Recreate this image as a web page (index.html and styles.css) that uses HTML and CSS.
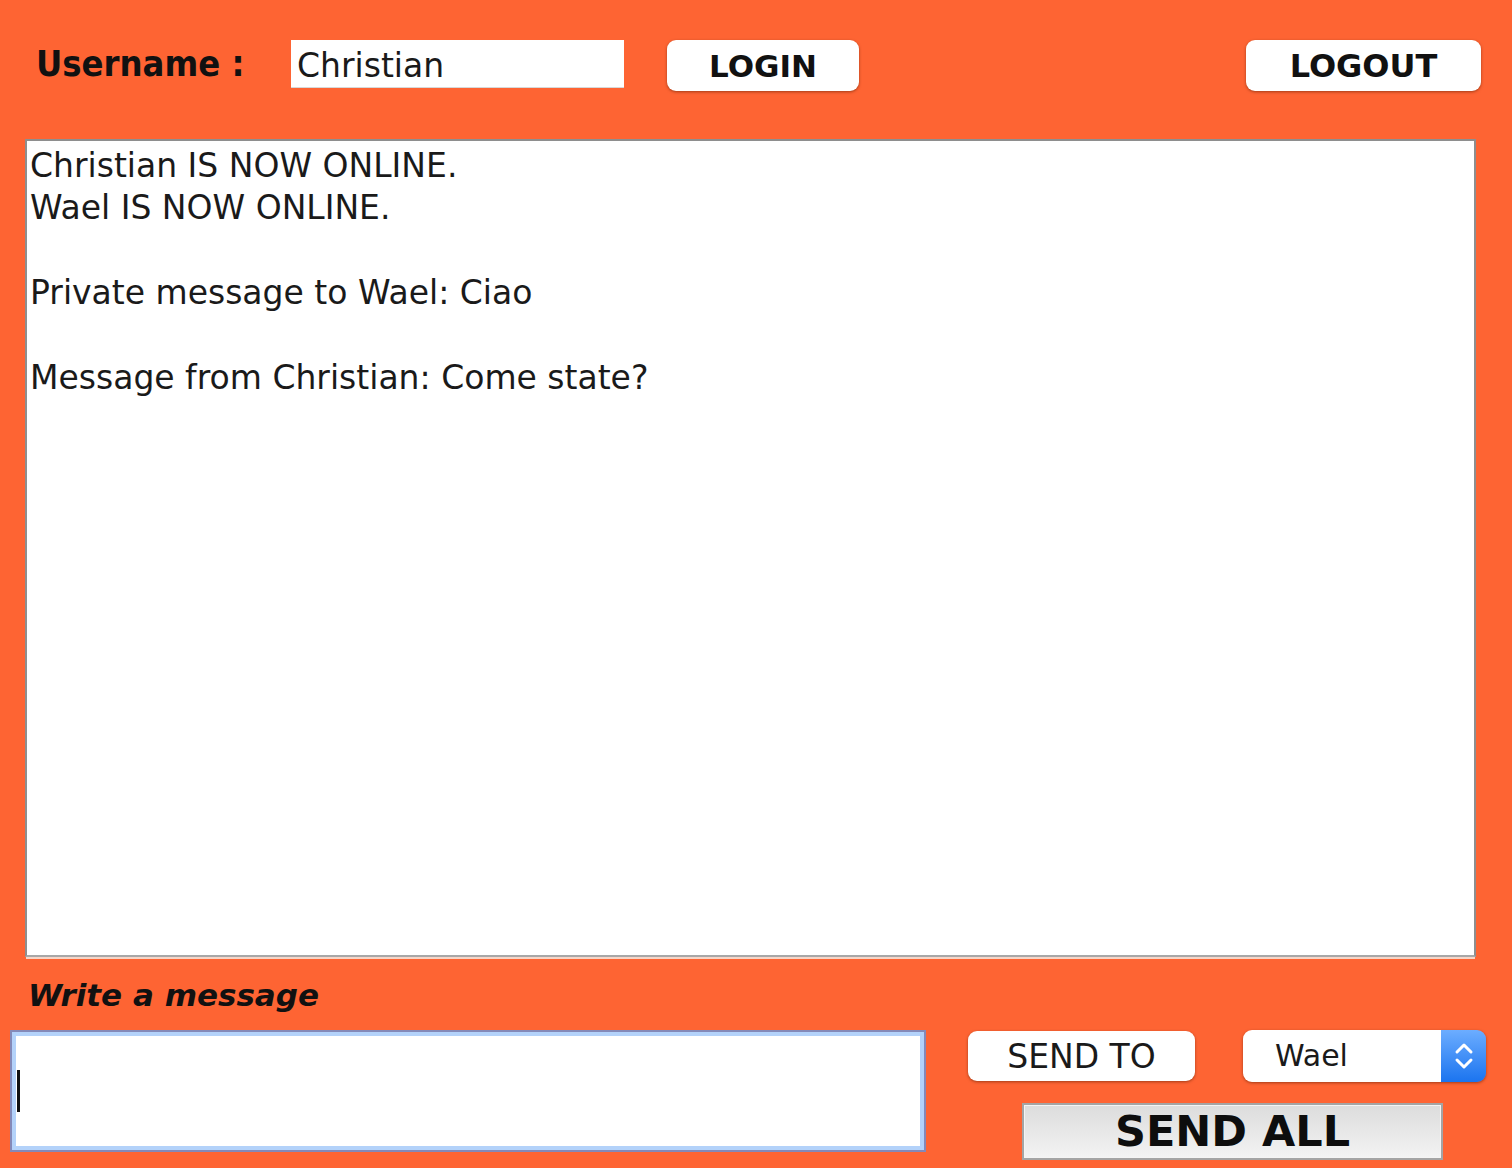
FILE: index.html
```html
<!DOCTYPE html>
<html lang="en">
<head>
<meta charset="utf-8">
<title>Chat Client</title>
<link rel="stylesheet" href="styles.css">
</head>
<body>
<div class="window">
  <div class="top">
    <div class="user-label">Username :</div>
    <div class="user-field">Christian</div>
    <div class="btn btn-login">LOGIN</div>
    <div class="btn btn-logout">LOGOUT</div>
  </div>

  <div class="chat">
    <div class="line">Christian IS NOW ONLINE.</div>
    <div class="line">Wael IS NOW ONLINE.</div>
    <div class="line blank"></div>
    <div class="line">Private message to Wael: Ciao</div>
    <div class="line blank"></div>
    <div class="line">Message from Christian: Come state?</div>
  </div>

  <div class="compose-label">Write a message</div>

  <div class="bottom">
    <div class="compose"><span class="caret"></span></div>
    <div class="actions">
      <div class="actions-row">
        <div class="btn btn-sendto">SEND TO</div>
        <div class="combo">
          <div class="combo-value">Wael</div>
          <div class="combo-arrows">
            <svg width="24" height="34" viewBox="0 0 24 34">
              <path d="M5 13 L12 6 L19 13" fill="none" stroke="#fff" stroke-width="3" stroke-linecap="round" stroke-linejoin="round"/>
              <path d="M5 21 L12 28 L19 21" fill="none" stroke="#fff" stroke-width="3" stroke-linecap="round" stroke-linejoin="round"/>
            </svg>
          </div>
        </div>
      </div>
      <div class="btn-sendall">SEND ALL</div>
    </div>
  </div>
</div>
</body>
</html>
```

FILE: styles.css
```css
html, body {
  margin: 0;
  padding: 0;
}

body {
  background: #fe6433;
  font-family: "DejaVu Sans", "Liberation Sans", sans-serif;
  color: #111;
}

.window {
  width: 1512px;
  height: 1168px;
  display: flex;
  flex-direction: column;
  overflow: hidden;
}

/* ---------- top bar ---------- */
.top {
  display: flex;
  align-items: flex-start;
  padding: 40px 31px 0 36px;
  height: 51px;
}

.user-label {
  font-family: "DejaVu Sans Condensed", "DejaVu Sans", sans-serif;
  font-stretch: condensed;
  font-weight: bold;
  font-size: 36px;
  line-height: 48px;
  color: #111;
  width: 210px;
  white-space: nowrap;
}

.user-field {
  margin-left: 45px;
  width: 333px;
  height: 48px;
  box-sizing: border-box;
  background: #fff;
  border-bottom: 1px solid #d8d8d8;
  font-size: 33px;
  line-height: 51px;
  padding-left: 6px;
  color: #1a1a1a;
  overflow: hidden;
}

.btn {
  background: #fff;
  border-radius: 9px;
  box-shadow: 0 1px 3px rgba(90, 30, 0, 0.55);
  display: flex;
  align-items: center;
  justify-content: center;
  box-sizing: border-box;
  color: #111;
}

.btn-login {
  margin-left: 43px;
  width: 192px;
  height: 51px;
  font-weight: bold;
  font-size: 31px;
}

.btn-logout {
  margin-left: auto;
  width: 235px;
  height: 51px;
  font-weight: bold;
  font-size: 32px;
}

/* ---------- chat area ---------- */
.chat {
  margin: 48px 0 0 25px;
  width: 1451px;
  height: 818px;
  box-sizing: border-box;
  background: #fff;
  border: 2px solid #8e8e8e;
  border-bottom-color: #a8a8a8;
  box-shadow: 0 3px 0 -1px #f6d6c8;
  padding: 4px 3px;
  font-size: 33px;
  line-height: 42.4px;
  color: #1a1a1a;
}

.line.blank {
  height: 42.4px;
}

/* ---------- compose ---------- */
.compose-label {
  margin-top: 20px;
  padding-left: 28px;
  font-weight: bold;
  font-style: italic;
  font-size: 31px;
  line-height: 36px;
  color: #111;
}

.bottom {
  display: flex;
  margin-top: 17px;
  padding-left: 10px;
}

.compose {
  width: 916px;
  height: 122px;
  box-sizing: border-box;
  background: #fff;
  border: 2px solid #8489b8;
  box-shadow: inset 0 0 0 4px #b3d2fa;
  padding-left: 5px;
  display: flex;
  align-items: center;
}

.caret {
  display: block;
  width: 3px;
  height: 42px;
  background: #111;
}

.actions {
  margin-left: 42px;
  display: flex;
  flex-direction: column;
}

.actions-row {
  display: flex;
  align-items: flex-start;
}

.btn-sendto {
  margin-top: 1px;
  width: 227px;
  height: 50px;
  font-size: 33px;
  color: #1a1a1a;
}

.combo {
  margin-left: 48px;
  width: 243px;
  height: 52px;
  display: flex;
  border-radius: 9px;
  overflow: hidden;
  box-shadow: 0 1px 3px rgba(90, 30, 0, 0.55);
}

.combo-value {
  flex: 1;
  background: #fff;
  font-size: 30px;
  line-height: 52px;
  padding-left: 32px;
  color: #1a1a1a;
}

.combo-arrows {
  width: 45px;
  background: linear-gradient(#6cadff, #1b74ef);
  display: flex;
  align-items: center;
  justify-content: center;
}

.btn-sendall {
  margin-top: 21px;
  margin-left: 54px;
  width: 421px;
  height: 57px;
  box-sizing: border-box;
  background: linear-gradient(#dcdcdc, #f3f3f3);
  border: 2px solid #a4a4a4;
  box-shadow: inset 0 0 0 1px #f4f4f4;
  font-weight: bold;
  font-size: 43px;
  line-height: 53px;
  text-align: center;
  color: #0d0d0d;
}
```
